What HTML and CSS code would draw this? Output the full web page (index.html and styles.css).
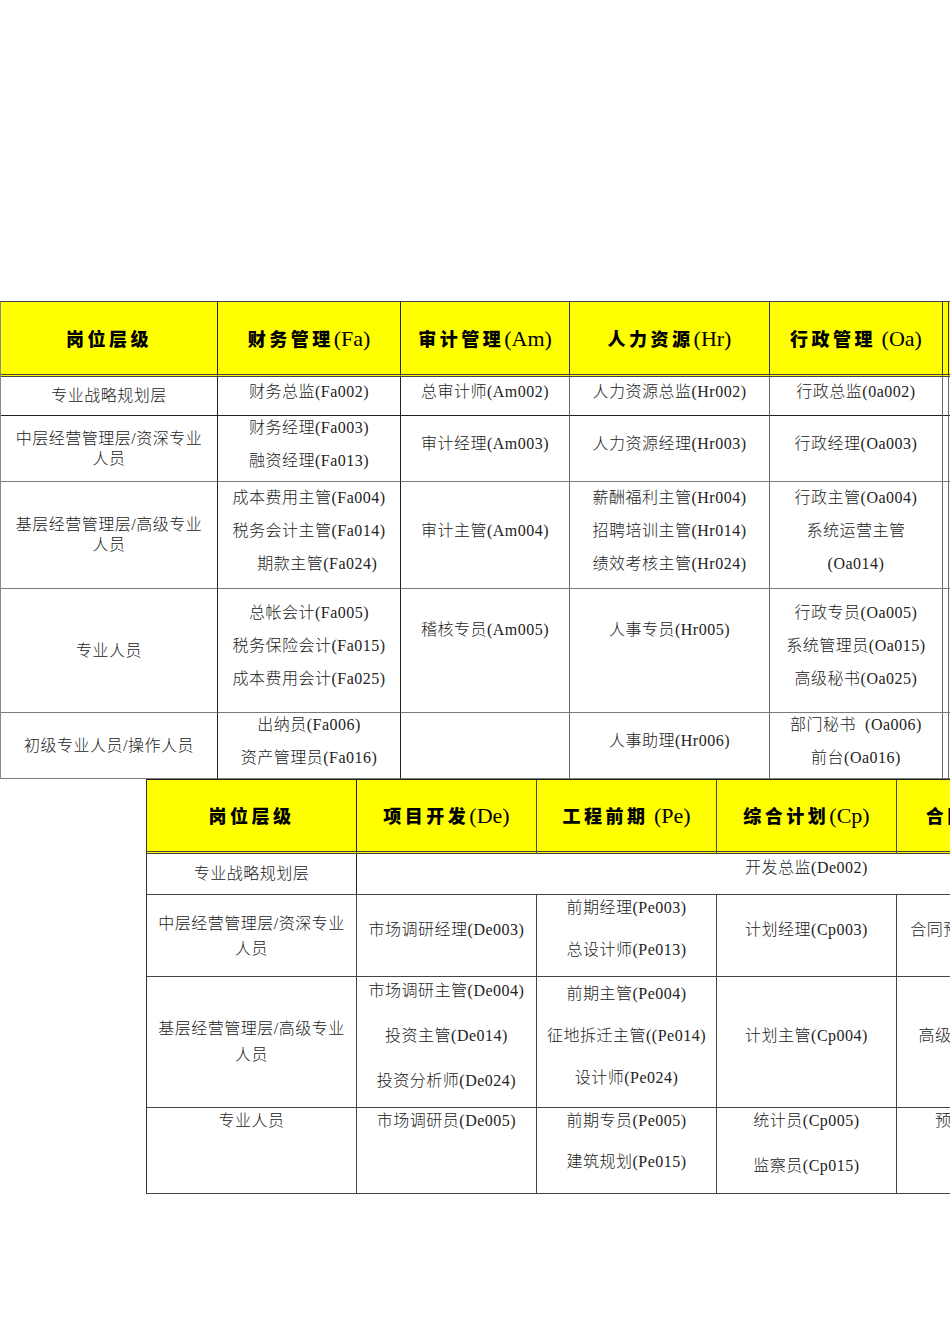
FILE: index.html
```html
<!DOCTYPE html>
<html lang="zh-CN">
<head>
<meta charset="utf-8">
<title>岗位层级</title>
<link rel="stylesheet" href="styles.css">
</head>
<body>
<div class="sheet t1">
  <div class="c h"><div class="ht"><span class="hz">岗位层级</span></div></div>
  <div class="c h"><div class="ht"><span class="hz">财务管理</span>(Fa)</div></div>
  <div class="c h"><div class="ht"><span class="hz">审计管理</span>(Am)</div></div>
  <div class="c h"><div class="ht"><span class="hz">人力资源</span>(Hr)</div></div>
  <div class="c h"><div class="ht"><span class="hz">行政管理</span> (Oa)</div></div>
  <div class="c h"></div>
  <div class="c h"></div>

  <div class="c k">专业战略规划层</div>
  <div class="c d"><div class="ln">财务总监(Fa002)</div></div>
  <div class="c d"><div class="ln">总审计师(Am002)</div></div>
  <div class="c d"><div class="ln">人力资源总监(Hr002)</div></div>
  <div class="c d"><div class="ln">行政总监(0a002)</div></div>
  <div class="c"></div>
  <div class="c"></div>

  <div class="c k w20">中层经营管理层/资深专业<br>人员</div>
  <div class="c d"><div class="ln">财务经理(Fa003)</div><div class="ln">融资经理(Fa013)</div></div>
  <div class="c d"><div class="ln">审计经理(Am003)</div></div>
  <div class="c d"><div class="ln">人力资源经理(Hr003)</div></div>
  <div class="c d"><div class="ln">行政经理(Oa003)</div></div>
  <div class="c"></div>
  <div class="c"></div>

  <div class="c k w20">基层经营管理层/高级专业<br>人员</div>
  <div class="c d"><div class="ln">成本费用主管(Fa004)</div><div class="ln">税务会计主管(Fa014)</div><div class="ln">　期款主管(Fa024)</div></div>
  <div class="c d"><div class="ln">审计主管(Am004)</div></div>
  <div class="c d"><div class="ln">薪酬福利主管(Hr004)</div><div class="ln">招聘培训主管(Hr014)</div><div class="ln">绩效考核主管(Hr024)</div></div>
  <div class="c d"><div class="ln">行政主管(Oa004)</div><div class="ln">系统运营主管</div><div class="ln">(Oa014)</div></div>
  <div class="c"></div>
  <div class="c"></div>

  <div class="c k">专业人员</div>
  <div class="c d"><div class="ln">总帐会计(Fa005)</div><div class="ln">税务保险会计(Fa015)</div><div class="ln">成本费用会计(Fa025)</div></div>
  <div class="c d"><div class="ln">稽核专员(Am005)</div><div class="ln">&nbsp;</div></div>
  <div class="c d"><div class="ln">人事专员(Hr005)</div><div class="ln">&nbsp;</div></div>
  <div class="c d"><div class="ln">行政专员(Oa005)</div><div class="ln">系统管理员(Oa015)</div><div class="ln">高级秘书(Oa025)</div></div>
  <div class="c"></div>
  <div class="c"></div>

  <div class="c k">初级专业人员/操作人员</div>
  <div class="c d"><div class="ln">出纳员(Fa006)</div><div class="ln">资产管理员(Fa016)</div></div>
  <div class="c d"></div>
  <div class="c d"><div class="ln">人事助理(Hr006)</div></div>
  <div class="c d"><div class="ln">部门秘书&nbsp;&nbsp;(Oa006)</div><div class="ln">前台(Oa016)</div></div>
  <div class="c"></div>
  <div class="c"></div>
</div>

<div class="sheet t2">
  <div class="c h"><div class="ht"><span class="hz">岗位层级</span></div></div>
  <div class="c h"><div class="ht"><span class="hz">项目开发</span>(De)</div></div>
  <div class="c h"><div class="ht"><span class="hz">工程前期</span> (Pe)</div></div>
  <div class="c h"><div class="ht"><span class="hz">综合计划</span>(Cp)</div></div>
  <div class="c h"><div class="ht"><span class="hz">合同预算</span>(Ct)</div></div>
  <div class="c h"></div>

  <div class="c k">专业战略规划层</div>
  <div class="c d span5 up"><div class="ln">开发总监(De002)</div></div>

  <div class="c k w25">中层经营管理层/资深专业<br>人员</div>
  <div class="c d2"><div class="ln">市场调研经理(De003)</div></div>
  <div class="c d2"><div class="ln l42">前期经理(Pe003)</div><div class="ln l42">总设计师(Pe013)</div></div>
  <div class="c d2"><div class="ln">计划经理(Cp003)</div></div>
  <div class="c d2"><div class="ln">合同预算经理(Ct003)</div></div>
  <div class="c d2"></div>

  <div class="c k w26">基层经营管理层/高级专业<br>人员</div>
  <div class="c d2"><div class="ln l45">市场调研主管(De004)</div><div class="ln l45">投资主管(De014)</div><div class="ln l45">投资分析师(De024)</div></div>
  <div class="c d2"><div class="ln l42">前期主管(Pe004)</div><div class="ln l42">征地拆迁主管((Pe014)</div><div class="ln l42">设计师(Pe024)</div></div>
  <div class="c d2"><div class="ln">计划主管(Cp004)</div></div>
  <div class="c d2"><div class="ln">高级预算师(Ct004)</div></div>
  <div class="c d2"></div>

  <div class="c k top"><div class="ln l26">专业人员</div></div>
  <div class="c top"><div class="ln l26">市场调研员(De005)</div></div>
  <div class="c top g15"><div class="ln l26">前期专员(Pe005)</div><div class="ln l26">建筑规划(Pe015)</div></div>
  <div class="c top g19"><div class="ln l26">统计员(Cp005)</div><div class="ln l26">监察员(Cp015)</div></div>
  <div class="c top"><div class="ln l26">预算员(Ct005)</div></div>
  <div class="c top"></div>
</div>
</body>
</html>
```

FILE: styles.css
```css
html, body {
  margin: 0;
  padding: 0;
  overflow: hidden;
  background: #ffffff;
}

body {
  width: 950px;
  height: 1344px;
  font-family: "Liberation Serif", "Noto Sans CJK SC", serif;
  font-size: 16px;
  font-weight: 300;
  color: #222222;
}

.sheet {
  display: grid;
  width: max-content;
}

.t1 {
  grid-template-columns: 217px 183px 169px 200px 173px 6px 180px;
  grid-template-rows: 75px 39px 66px 107px 124px 66px;
  margin-top: 301px;
  border-top: 1px solid #444444;
  border-left: 1px solid #888888;
}

.t2 {
  grid-template-columns: 210px 180px 180px 180px 180px 180px;
  grid-template-rows: 74px 41px 82px 131px 86px;
  margin-left: 146px;
  border-top: 1px solid #222222;
  border-left: 1px solid #333333;
}

.c {
  box-sizing: border-box;
  border-right: 1px solid #6a6a6a;
  border-bottom: 1px solid #7a7a7a;
  display: flex;
  flex-direction: column;
  justify-content: center;
  align-items: center;
  text-align: center;
  letter-spacing: 0.5px;
}

.t1 > .c:nth-child(7n+1),
.t1 > .c:nth-child(7n+2) {
  border-right-color: #222222;
}

.t1 > .c:nth-child(n+8):nth-child(-n+14) {
  border-bottom-color: #222222;
}

.t2 > .c {
  border-color: #444444;
}

.t2 > .c:nth-child(6n+1) {
  border-right-color: #222222;
}

.h {
  background: #ffff00;
  border-bottom: 3px double #444444;
  color: #000000;
  font-size: 22px;
  font-weight: 400;
  letter-spacing: 0;
}

.t1 > .h {
  border-right-color: #333333;
}

.ht {
  white-space: nowrap;
}

.hz {
  font-family: "Noto Sans CJK SC", sans-serif;
  font-weight: 900;
  font-size: 18px;
  letter-spacing: 3.5px;
}

.k {
  line-height: 20px;
  white-space: nowrap;
}

.w20 { line-height: 20px; }
.w25 { line-height: 25px; }
.w26 { line-height: 26px; }

.d {
  padding-bottom: 10px;
}

.d2 {
  padding-bottom: 13px;
}

.up {
  padding-bottom: 14px;
}

.span5 {
  grid-column: span 5;
}

.ln {
  line-height: 33px;
  white-space: nowrap;
}

.l26 { line-height: 26px; }
.l42 { line-height: 42px; }
.l45 { line-height: 45px; }

.top {
  justify-content: flex-start;
}

.g15 { gap: 15px; }
.g19 { gap: 19px; }
```
